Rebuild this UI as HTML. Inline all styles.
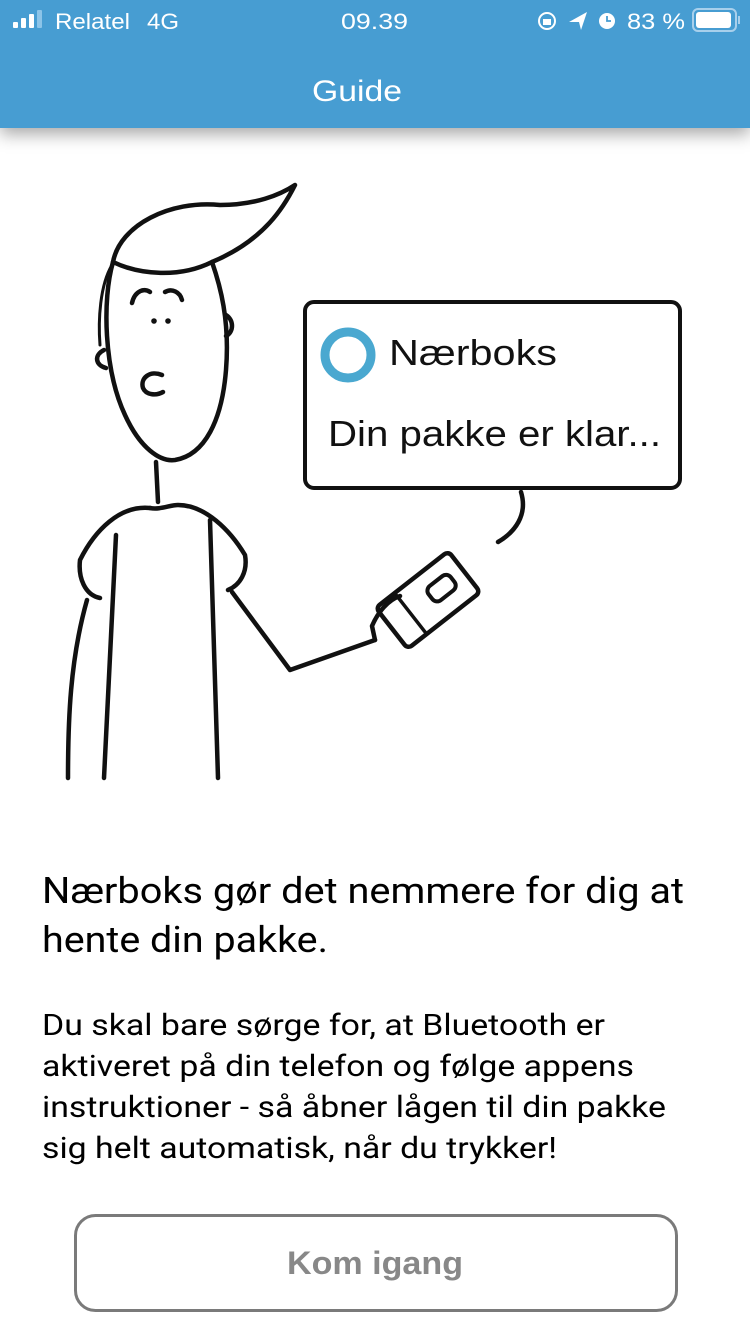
<!DOCTYPE html>
<html><head><meta charset="utf-8">
<style>
html,body{margin:0;padding:0;width:750px;height:1334px;background:#fff;overflow:hidden;font-family:"Roboto","Liberation Sans",sans-serif;}
.hdr{position:absolute;left:0;top:0;width:750px;height:128px;background:#479dd2;box-shadow:0 6px 16px rgba(0,0,0,0.35);}
svg{position:absolute;left:0;top:0;}
</style></head><body>
<div class="hdr"></div>
<svg width="750" height="1334" viewBox="0 0 750 1334">
  <g fill="#fff">
    <rect x="13" y="22" width="5" height="6" rx="1"/>
    <rect x="21" y="18" width="5" height="10" rx="1"/>
    <rect x="29" y="14" width="5" height="14" rx="1"/>
    <rect x="37" y="10" width="5" height="18" rx="1" fill="#8cc4e8"/>
    <text x="55" y="29" font-size="22" font-family="Liberation Sans, sans-serif" textLength="75" lengthAdjust="spacingAndGlyphs">Relatel</text>
    <text x="147" y="29" font-size="22" font-family="Liberation Sans, sans-serif" textLength="32" lengthAdjust="spacingAndGlyphs">4G</text>
    <text x="341" y="29" font-size="22" font-family="Liberation Sans, sans-serif" textLength="67" lengthAdjust="spacingAndGlyphs">09.39</text>
    <text x="627" y="29" font-size="22" font-family="Liberation Sans, sans-serif" textLength="58" lengthAdjust="spacingAndGlyphs">83 %</text>
  </g>
  <circle cx="547" cy="21" r="8" fill="none" stroke="#fff" stroke-width="2"/>
  <rect x="543" y="19" width="8" height="6" fill="#fff"/>
  <path d="M569 22 L587 12 L581 30 L579 22 Z" fill="#fff"/>
  <circle cx="607" cy="21" r="8" fill="#fff"/>
  <path d="M607 16 V21 H611" stroke="#479dd2" stroke-width="1.8" fill="none"/>
  <rect x="693" y="9" width="43" height="22" rx="5" fill="none" stroke="#a8d0ec" stroke-width="2"/>
  <rect x="696" y="12" width="35" height="16" rx="3" fill="#fff"/>
  <rect x="738" y="16" width="2" height="8" fill="#a8d0ec"/>
  <text x="357" y="101" font-size="30" fill="#fff" text-anchor="middle" font-weight="500" font-family="Liberation Sans, sans-serif" textLength="90" lengthAdjust="spacingAndGlyphs">Guide</text>

  <g fill="none" stroke="#111" stroke-width="4.5" stroke-linecap="round" stroke-linejoin="round">
    <path d="M113 262 C102 300 104 370 125 415 C140 448 160 462 175 460 C205 455 222 420 226 370 C230 320 220 285 212 262"/>
    <path d="M113 262 C120 225 170 200 220 205 C255 205 280 195 295 185 C285 205 265 240 212 262 C180 278 140 275 113 262 Z"/>
    <path d="M112 265 C100 285 98 320 100 345" stroke-width="3"/>
    <path d="M104 350 C94 355 95 365 106 368"/>
    <path d="M226 315 C234 320 234 332 226 336"/>
    <path d="M132 303 C135 290 145 288 150 292"/>
    <path d="M165 292 C172 288 180 292 182 300"/>
    <path d="M162 375 C150 370 140 378 143 388 C146 395 156 396 163 392"/>
    <path d="M156 462 L158 502"/>
    <path d="M150 508 C120 505 95 530 80 560 C78 578 85 595 100 598"/>
    <path d="M150 508 C160 510 170 505 178 505 C205 505 230 530 245 555 C248 572 240 585 228 590"/>
    <path d="M116 535 L104 778"/>
    <path d="M210 520 L218 778"/>
    <path d="M87 600 C70 660 68 720 68 778"/>
    <path d="M232 592 L290 670 L375 640"/>
    <g transform="translate(428,600) rotate(52)">
      <rect x="-26" y="-46" width="52" height="92" rx="5" fill="#fff"/>
      <rect x="-10" y="-32" width="18" height="28" rx="6" stroke-width="4"/>
      <path d="M-26 22 H26" stroke-width="3.5"/>
    </g>
    <path d="M375 640 L372 626 C378 612 388 600 400 596"/>
    <rect x="305" y="302" width="375" height="186" rx="9" stroke-width="4"/>
    <path d="M521 492 C528 515 515 532 498 542"/>
  </g>
  <circle cx="154" cy="321" r="2.8" fill="#111"/>
  <circle cx="168" cy="321" r="2.8" fill="#111"/>
  <circle cx="348" cy="355" r="23" fill="none" stroke="#4aa8d0" stroke-width="9"/>
  <text x="389" y="365" font-size="36" fill="#111" font-family="Liberation Sans, sans-serif" textLength="168" lengthAdjust="spacingAndGlyphs">Nærboks</text>
  <text x="328" y="446" font-size="36" fill="#111" font-family="Liberation Sans, sans-serif" textLength="333" lengthAdjust="spacingAndGlyphs">Din pakke er klar...</text>

  <g fill="#000" font-family="Roboto, Liberation Sans, sans-serif">
    <text x="42" y="903" font-size="36" textLength="642" lengthAdjust="spacingAndGlyphs">Nærboks gør det nemmere for dig at</text>
    <text x="42" y="952" font-size="36" textLength="286" lengthAdjust="spacingAndGlyphs">hente din pakke.</text>
    <text x="42" y="1035" font-size="30" textLength="563" lengthAdjust="spacingAndGlyphs">Du skal bare sørge for, at Bluetooth er</text>
    <text x="42" y="1076" font-size="30" textLength="592" lengthAdjust="spacingAndGlyphs">aktiveret på din telefon og følge appens</text>
    <text x="42" y="1117" font-size="30" textLength="624" lengthAdjust="spacingAndGlyphs">instruktioner - så åbner lågen til din pakke</text>
    <text x="42" y="1158" font-size="30" textLength="515" lengthAdjust="spacingAndGlyphs">sig helt automatisk, når du trykker!</text>
  </g>
  <rect x="75.5" y="1215.5" width="601" height="95" rx="20" fill="none" stroke="#7a7a7a" stroke-width="3"/>
  <text x="287" y="1274" font-size="32" fill="#888" font-weight="bold" font-family="Liberation Sans, sans-serif" textLength="176" lengthAdjust="spacingAndGlyphs">Kom igang</text>
</svg>
</body></html>
